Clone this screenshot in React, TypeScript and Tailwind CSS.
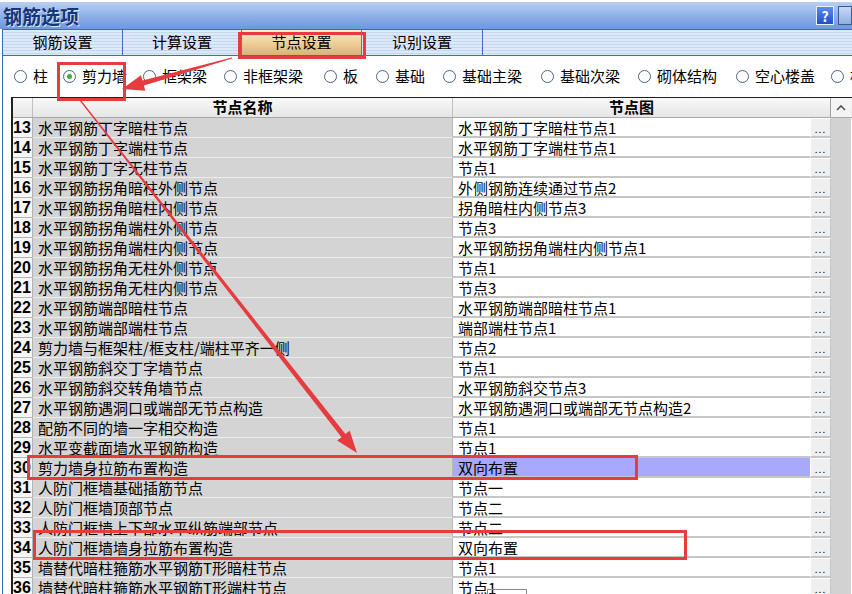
import React from "react";

type Row = { no: number; name: string; pic: string };

const rows: Row[] = [
  { no: 13, name: "水平钢筋丁字暗柱节点", pic: "水平钢筋丁字暗柱节点1" },
  { no: 14, name: "水平钢筋丁字端柱节点", pic: "水平钢筋丁字端柱节点1" },
  { no: 15, name: "水平钢筋丁字无柱节点", pic: "节点1" },
  { no: 16, name: "水平钢筋拐角暗柱外侧节点", pic: "外侧钢筋连续通过节点2" },
  { no: 17, name: "水平钢筋拐角暗柱内侧节点", pic: "拐角暗柱内侧节点3" },
  { no: 18, name: "水平钢筋拐角端柱外侧节点", pic: "节点3" },
  { no: 19, name: "水平钢筋拐角端柱内侧节点", pic: "水平钢筋拐角端柱内侧节点1" },
  { no: 20, name: "水平钢筋拐角无柱外侧节点", pic: "节点1" },
  { no: 21, name: "水平钢筋拐角无柱内侧节点", pic: "节点3" },
  { no: 22, name: "水平钢筋端部暗柱节点", pic: "水平钢筋端部暗柱节点1" },
  { no: 23, name: "水平钢筋端部端柱节点", pic: "端部端柱节点1" },
  { no: 24, name: "剪力墙与框架柱/框支柱/端柱平齐一侧", pic: "节点2" },
  { no: 25, name: "水平钢筋斜交丁字墙节点", pic: "节点1" },
  { no: 26, name: "水平钢筋斜交转角墙节点", pic: "水平钢筋斜交节点3" },
  { no: 27, name: "水平钢筋遇洞口或端部无节点构造", pic: "水平钢筋遇洞口或端部无节点构造2" },
  { no: 28, name: "配筋不同的墙一字相交构造", pic: "节点1" },
  { no: 29, name: "水平变截面墙水平钢筋构造", pic: "节点1" },
  { no: 30, name: "剪力墙身拉筋布置构造", pic: "双向布置" },
  { no: 31, name: "人防门框墙基础插筋节点", pic: "节点一" },
  { no: 32, name: "人防门框墙顶部节点", pic: "节点二" },
  { no: 33, name: "人防门框墙上下部水平纵筋端部节点", pic: "节点二" },
  { no: 34, name: "人防门框墙墙身拉筋布置构造", pic: "双向布置" },
  { no: 35, name: "墙替代暗柱箍筋水平钢筋T形暗柱节点", pic: "节点1" },
  { no: 36, name: "墙替代暗柱箍筋水平钢筋T形端柱节点", pic: "节点1" },
];

const tabs = ["钢筋设置", "计算设置", "节点设置", "识别设置"];

const kinds: { label: string; w: string }[] = [
  { label: "柱", w: "w-[49px]" },
  { label: "剪力墙", w: "w-[80px]" },
  { label: "框架梁", w: "w-[81px]" },
  { label: "非框架梁", w: "w-[100px]" },
  { label: "板", w: "w-[52px]" },
  { label: "基础", w: "w-[67px]" },
  { label: "基础主梁", w: "w-[98px]" },
  { label: "基础次梁", w: "w-[97px]" },
  { label: "砌体结构", w: "w-[98px]" },
  { label: "空心楼盖", w: "w-[95px]" },
  { label: "桩承台", w: "w-[90px]" },
];

// tapered red arrow, like a screenshot annotation
function arrowPoints(x1: number, y1: number, x2: number, y2: number) {
  const dx = x2 - x1;
  const dy = y2 - y1;
  const len = Math.hypot(dx, dy);
  const ux = dx / len;
  const uy = dy / len;
  const nx = -uy;
  const ny = ux;
  const head = 22;
  const bx = x2 - ux * head;
  const by = y2 - uy * head;
  const p = (x: number, y: number) => `${x.toFixed(1)},${y.toFixed(1)}`;
  return [
    p(x1 + nx * 0.6, y1 + ny * 0.6),
    p(bx + nx * 2.5, by + ny * 2.5),
    p(bx + nx * 8, by + ny * 8),
    p(x2, y2),
    p(bx - nx * 8, by - ny * 8),
    p(bx - nx * 2.5, by - ny * 2.5),
    p(x1 - nx * 0.6, y1 - ny * 0.6),
  ].join(" ");
}

function Radio({ checked }: { checked?: boolean }) {
  return (
    <span className="flex h-[13px] w-[13px] shrink-0 items-center justify-center rounded-full border border-[#4a6288] bg-white">
      {checked && <span className="h-[5px] w-[5px] rounded-full bg-[#3fae3a]" />}
    </span>
  );
}

export default function App() {
  return (
    <div
      className="relative h-[594px] w-[852px] overflow-hidden bg-white text-black"
      style={{ fontFamily: '"Noto Sans CJK SC", "Liberation Sans", sans-serif' }}
    >
      {/* title bar */}
      <div className="flex h-[29px] items-center justify-between border-t-2 border-white bg-gradient-to-b from-[#b9cff2] via-[#8eb0e8] to-[#6f97dd] pl-[3px]">
        <span className="text-[19px] font-bold leading-none tracking-[0px] text-[#16367a] [text-shadow:1px_1px_0_#d8e4f8]">
          钢筋选项
        </span>
        <div className="flex items-center gap-[4px]">
          <span className="flex h-[19px] w-[18px] items-center justify-center border border-[#e8f0ff] bg-gradient-to-b from-[#5a8cf0] to-[#1e4fc8] text-[14px] font-bold leading-none text-white">
            ?
          </span>
          <span className="h-[19px] w-[14px] border border-[#3a5a90] bg-gradient-to-b from-[#c8d8f4] to-[#8eaee0]" />
        </div>
      </div>

      <div className="ml-[2px] border-l border-[#3d6bb5]">
        {/* tab strip */}
        <div className="flex h-[27px] border-y border-[#3d6bb5] bg-[repeating-linear-gradient(to_bottom,#dde8f8_0px,#dde8f8_2px,#c6d7f1_2px,#c6d7f1_3px)]">
          {tabs.map((t, i) =>
            i === 2 ? (
              <div
                key={t}
                className="flex w-[121px] items-center justify-center border-x border-[#8c7446] bg-gradient-to-b from-[#fbecc8] via-[#eed09a] to-[#dcb274] text-[15px]"
              >
                {t}
              </div>
            ) : (
              <div
                key={t}
                className={`flex items-center justify-center text-[15px] ${i === 0 ? "w-[120px] border-r border-[#3d6bb5]" : i === 1 ? "w-[118px]" : "w-[121px] border-r border-[#3d6bb5]"}`}
              >
                {t}
              </div>
            )
          )}
        </div>

        {/* element kind radios */}
        <div className="flex h-[41px] items-center pl-[11px] text-[15px]">
          {kinds.map((k, i) => (
            <div key={k.label} className={`flex shrink-0 items-center gap-[6px] ${k.w}`}>
              <Radio checked={i === 1} />
              <span className="whitespace-nowrap">{k.label}</span>
            </div>
          ))}
        </div>

        {/* table */}
        <div className="ml-[8px] border-l-2 border-t border-[#202020]">
          <div className="flex h-[20px] border-b border-[#a8a8a8] bg-gradient-to-b from-[#f8f8f8] to-[#e6e6e6] text-[15px] font-bold">
            <div className="w-[20px] border-r border-[#c0c0c0]" />
            <div className="flex w-[420px] items-center justify-center border-r border-[#c0c0c0]">节点名称</div>
            <div className="flex w-[357px] items-center justify-center">节点图</div>
            <div className="w-[21px] border-r border-[#a0a0a0]" />
            <div className="flex w-[20px] items-center justify-center bg-[#f4f4f4]">
              <svg width="10" height="7" viewBox="0 0 10 7">
                <path d="M1 6 L5 2 L9 6" fill="none" stroke="#555" strokeWidth="1.6" />
              </svg>
            </div>
          </div>

          {rows.map((r) => (
            <div key={r.no} className="flex h-[20px] text-[15px] leading-none">
              <div className="flex w-[20px] items-center border-b border-r border-[#b4b4b4] bg-[#f7f7f7] text-[16px] font-bold" style={{ fontFamily: '"Liberation Sans", sans-serif' }}>
                {r.no}
              </div>
              <div className="flex w-[420px] items-center whitespace-nowrap border-b border-r border-b-[#ececec] border-r-[#b8b8b8] bg-[#d4d4d4] pl-[5px]">
                {r.name}
              </div>
              <div
                className={`flex w-[357px] items-center whitespace-nowrap border-b-2 border-[#c6c6c6] pl-[5px] ${r.no === 30 ? "bg-[#a8a8ff]" : "bg-white"}`}
              >
                {r.pic}
              </div>
              <div className="flex w-[21px] items-end justify-center border border-b-2 border-[#c6c6c6] border-t-white border-l-white bg-[#efefef] pb-[2px] text-[10px] leading-none tracking-[1px]">
                ...
              </div>
              <div className="w-[20px] bg-[#d2d2d2]" />
            </div>
          ))}
        </div>
      </div>

      {/* annotations drawn on the screenshot */}
      <div className="pointer-events-none absolute left-[238px] top-[32px] h-[27px] w-[128px] border-[3px] border-[#e63b3f]" />
      <div className="pointer-events-none absolute left-[57px] top-[62px] h-[39px] w-[69px] border-[3px] border-[#e63b3f]" />
      <div className="pointer-events-none absolute left-[27px] top-[455px] h-[25px] w-[611px] border-[3px] border-[#e63b3f]" />
      <div className="pointer-events-none absolute left-[33px] top-[530px] h-[30px] w-[654px] border-[3px] border-[#e63b3f]" />
      <div className="pointer-events-none absolute left-[487px] top-[589px] h-[10px] w-[40px] border border-[#8a8a8a]" />
      <svg className="pointer-events-none absolute left-0 top-0" width="852" height="594">
        <polygon points={arrowPoints(232, 58, 122, 89)} fill="#e63b3f" />
        <polygon points={arrowPoints(80, 100, 357, 453)} fill="#e63b3f" />
      </svg>
    </div>
  );
}
